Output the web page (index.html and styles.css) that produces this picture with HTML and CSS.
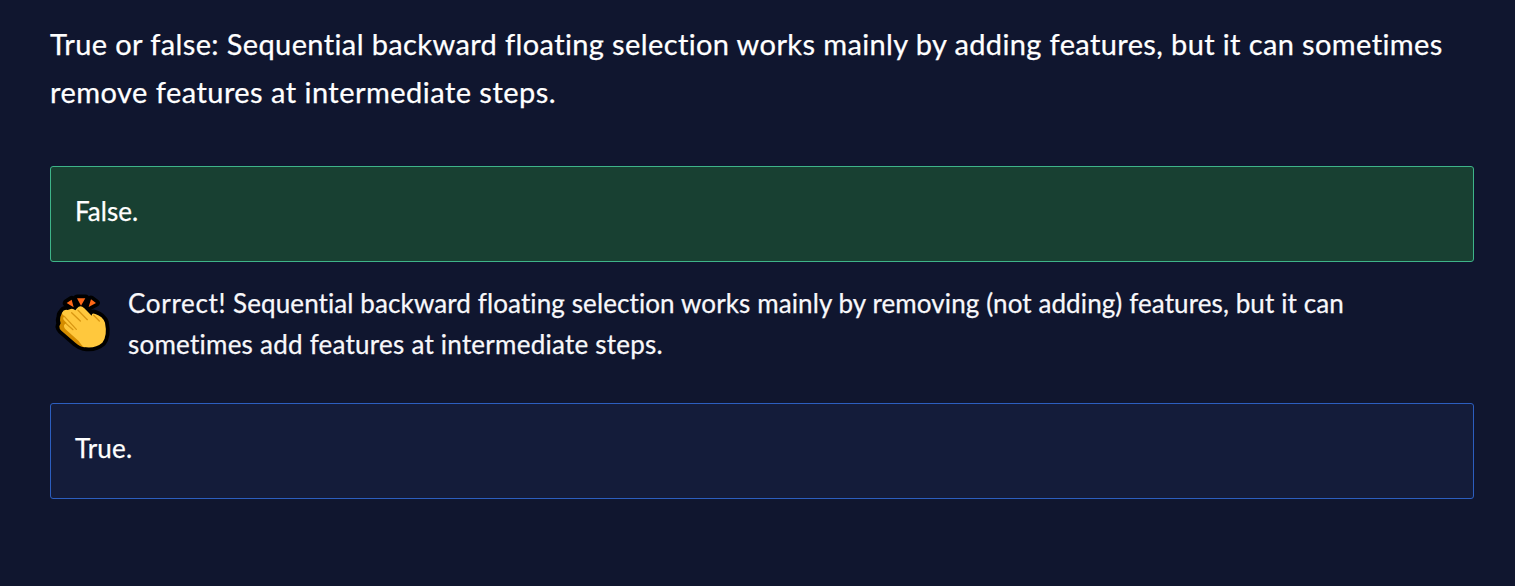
FILE: index.html
```
<!DOCTYPE html>
<html lang="en">
<head>
<meta charset="utf-8">
<title>Quiz</title>
<link rel="stylesheet" href="styles.css">
</head>
<body>
<main class="quiz">
  <h1 class="question"><span class="q-first">True or false: Sequential backward floating selection works mainly by adding features, but it can sometimes</span><br><span class="q-second">remove features at intermediate steps.</span></h1>
  <div class="answer correct"><span class="a-false">False.</span></div>
  <div class="feedback">
    <svg class="clap" viewBox="0 0 225 225" aria-hidden="true">
      <g class="outline">
        <path d="M65 54 80 44 86 67ZM96 40H121L108 62ZM138 43 153 54 131 66Z"/>
        <path d="M51 83Q56 72 68 75L77 72Q85 70 91 76L96 70Q106 58 118 70L140 92Q140 82 151 87Q173 94 180 113Q188 152 172 173Q150 192 116 186Q104 183 91 173L49 136Q39 125 47 117Q41 105 47 96Q45 88 51 83Z"/>
      </g>
      <path class="spark" d="M65 54 80 44 86 67ZM96 40H121L108 62ZM138 43 153 54 131 66Z"/>
      <path class="back" d="M51 83 46 96 45 106 47 115 43 124Q42 131 50 138L91 173Q104 185 120 187L140 150Z"/>
      <path class="hand" d="M51 83Q56 72 68 75L77 72Q85 70 91 76L96 70Q106 58 118 70L140 92Q140 82 151 87Q173 94 180 113Q188 152 172 173Q150 192 116 186Q109 180 101 168L64 135Q53 126 59 118L66 115 59 108Q50 99 59 94L55 91Q50 87 51 83Z"/>
      <path class="crease" d="M58 94 94 133M80 83 106 108M99 76 127 104M146 91 163 108M64 116 84 134"/>
    </svg>
    <p class="message"><span class="f-lead">Correct!</span><span class="f-first"> Sequential backward floating selection works mainly by removing (not adding) features, but it can</span><br><span class="f-second">sometimes add features at intermediate steps.</span></p>
  </div>
  <div class="answer"><span class="a-true">True.</span></div>
</main>
</body>
</html>
```
FILE: styles.css
```
body { margin: 0; background: #10162f; color: #fff; font-family: Lato, sans-serif; -webkit-text-stroke: .25px currentColor; }
.quiz { padding: 20px 41px 0 50px; }
.question { margin: 0; height: 146px; font-size: 29px; line-height: 48px; font-weight: 400; white-space: nowrap; }
.answer { box-sizing: border-box; height: 96px; padding: 23px 24px; border: 1px solid #2c5ebf; border-radius: 3px; background: #141c3a; font-size: 26px; line-height: 42px; }
.correct { border-color: #3eb489; background: #184032; }
.feedback { display: flex; height: 141px; box-sizing: border-box; padding-top: 21px; }
.clap { width: 75px; height: 75px; flex: none; margin: 2px 8px 0 -5px; }
.message { margin: 0; font-size: 26px; line-height: 41px; white-space: nowrap; color: #f8f8fb; }
.outline { fill: #000; stroke: #000; stroke-width: 23; stroke-linejoin: round; }
.spark { fill: #ff6817; }
.back { fill: #d48c00; }
.hand { fill: #ffc83d; }
.crease { fill: none; stroke: #d99612; stroke-width: 4; stroke-linecap: round; }
.q-first { letter-spacing: .38px; }
.q-second { letter-spacing: .47px; }
.f-lead { letter-spacing: .7px; }
.f-first { letter-spacing: .105px; }
.f-second { letter-spacing: .24px; }
.a-true { letter-spacing: .2px; }
```
